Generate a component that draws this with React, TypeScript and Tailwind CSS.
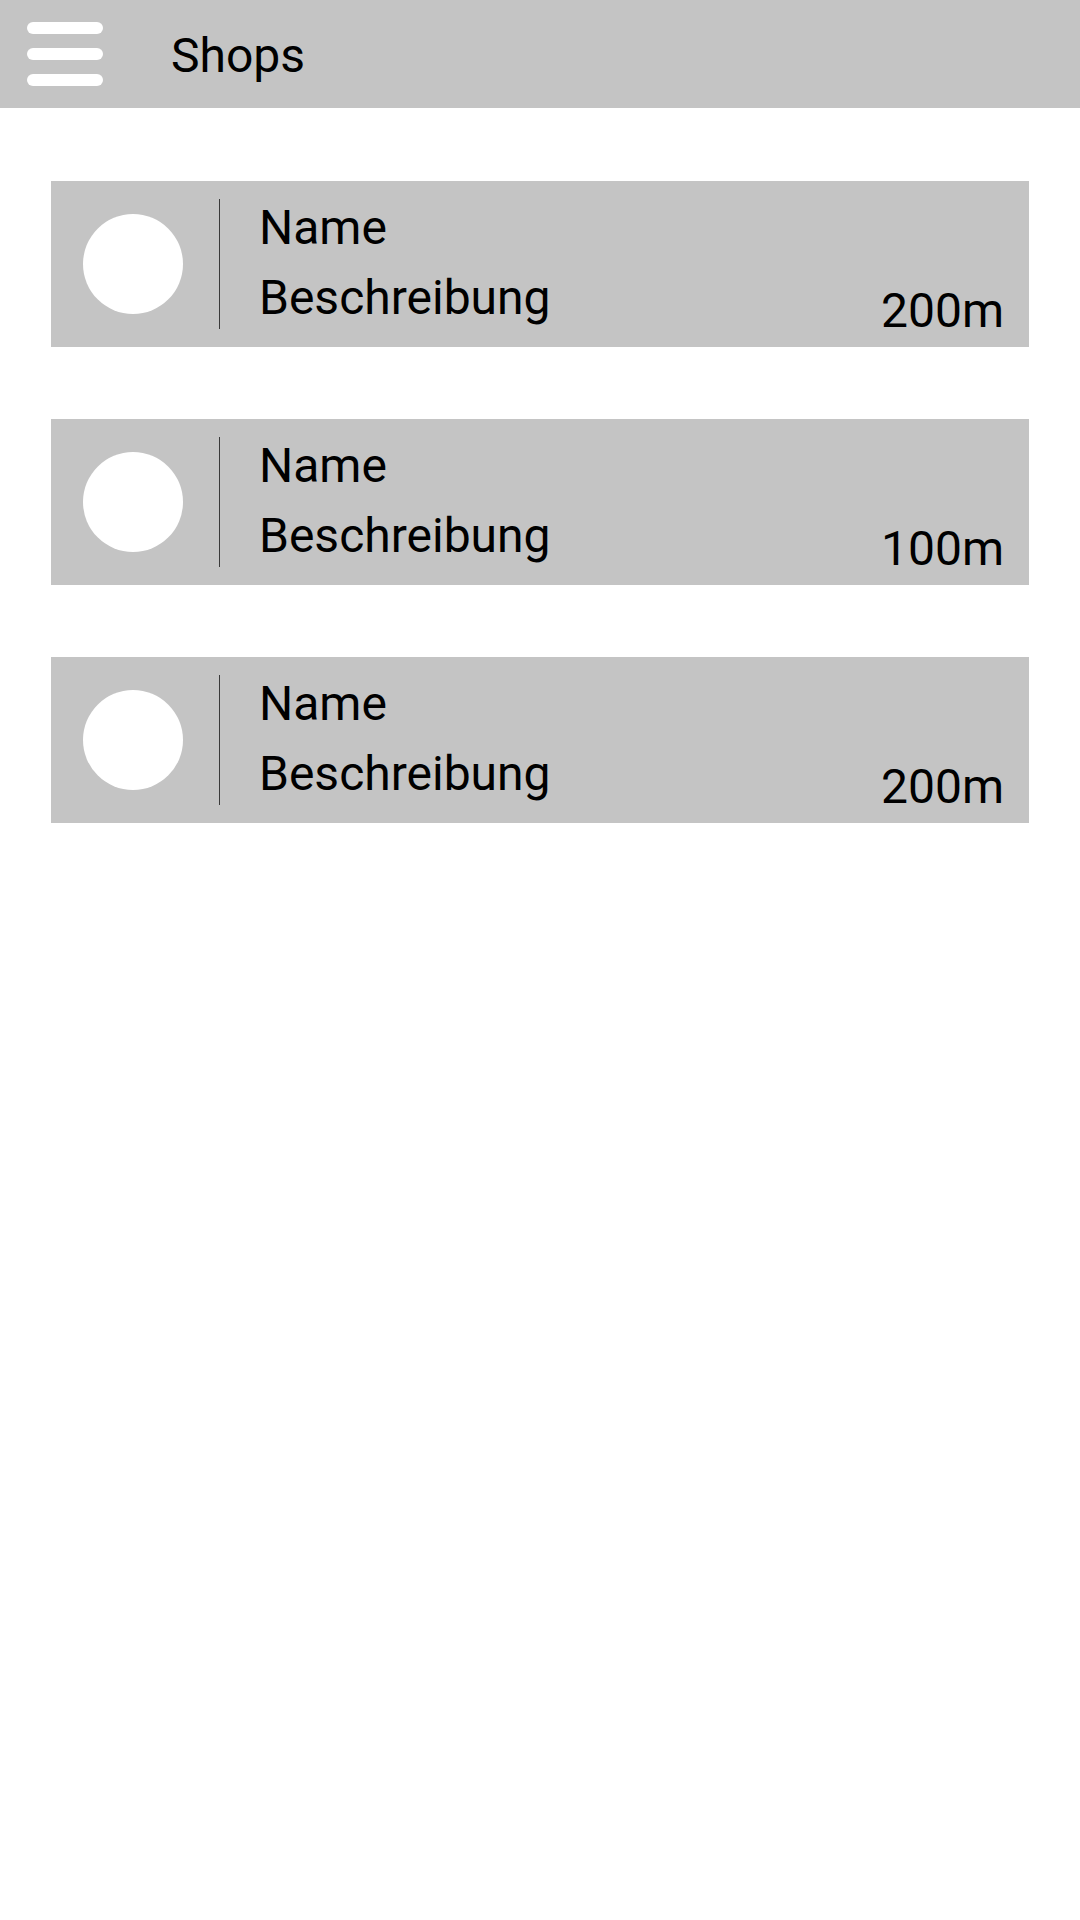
import React from "react";

type Shop = { name: string; description: string; distance: string };

const shops: Shop[] = [
  { name: "Name", description: "Beschreibung", distance: "200m" },
  { name: "Name", description: "Beschreibung", distance: "100m" },
  { name: "Name", description: "Beschreibung", distance: "200m" },
];

function MenuIcon() {
  return (
    <div className="flex flex-col gap-[14px]">
      <span className="block w-[76px] h-[12px] rounded-full bg-white" />
      <span className="block w-[76px] h-[12px] rounded-full bg-white" />
      <span className="block w-[76px] h-[12px] rounded-full bg-white" />
    </div>
  );
}

function ShopCard({ shop }: { shop: Shop }) {
  return (
    <div className="flex h-[166px] items-center bg-[#c4c4c4]">
      {/* Shop logo placeholder */}
      <div className="ml-[32px] h-[100px] w-[100px] flex-shrink-0 rounded-full bg-white" />
      <div className="ml-[36px] my-[18px] w-px self-stretch bg-[#3a3a3a]" />
      <div className="ml-[39px] flex flex-col self-stretch pt-[12px] text-[48px] leading-[70px] text-black">
        <span>{shop.name}</span>
        <span>{shop.description}</span>
      </div>
      <span className="ml-auto mr-[25px] mb-[12px] self-end text-[48px] leading-[48px] text-black">
        {shop.distance}
      </span>
    </div>
  );
}

export default function App() {
  return (
    <div
      className="min-h-[1920px] w-full bg-white"
      style={{ fontFamily: "Roboto, 'Noto Sans', sans-serif" }}
    >
      {/* Top bar */}
      <header className="flex h-[108px] items-center bg-[#c4c4c4] pl-[27px]">
        <MenuIcon />
        <h1 className="ml-[68px] pt-[3px] text-[48px] leading-[48px] font-normal text-black">
          Shops
        </h1>
      </header>

      {/* Shop list */}
      <main className="mx-[51px] flex flex-col gap-[72px] pt-[73px]">
        {shops.map((shop, i) => (
          <ShopCard key={i} shop={shop} />
        ))}
      </main>
    </div>
  );
}
